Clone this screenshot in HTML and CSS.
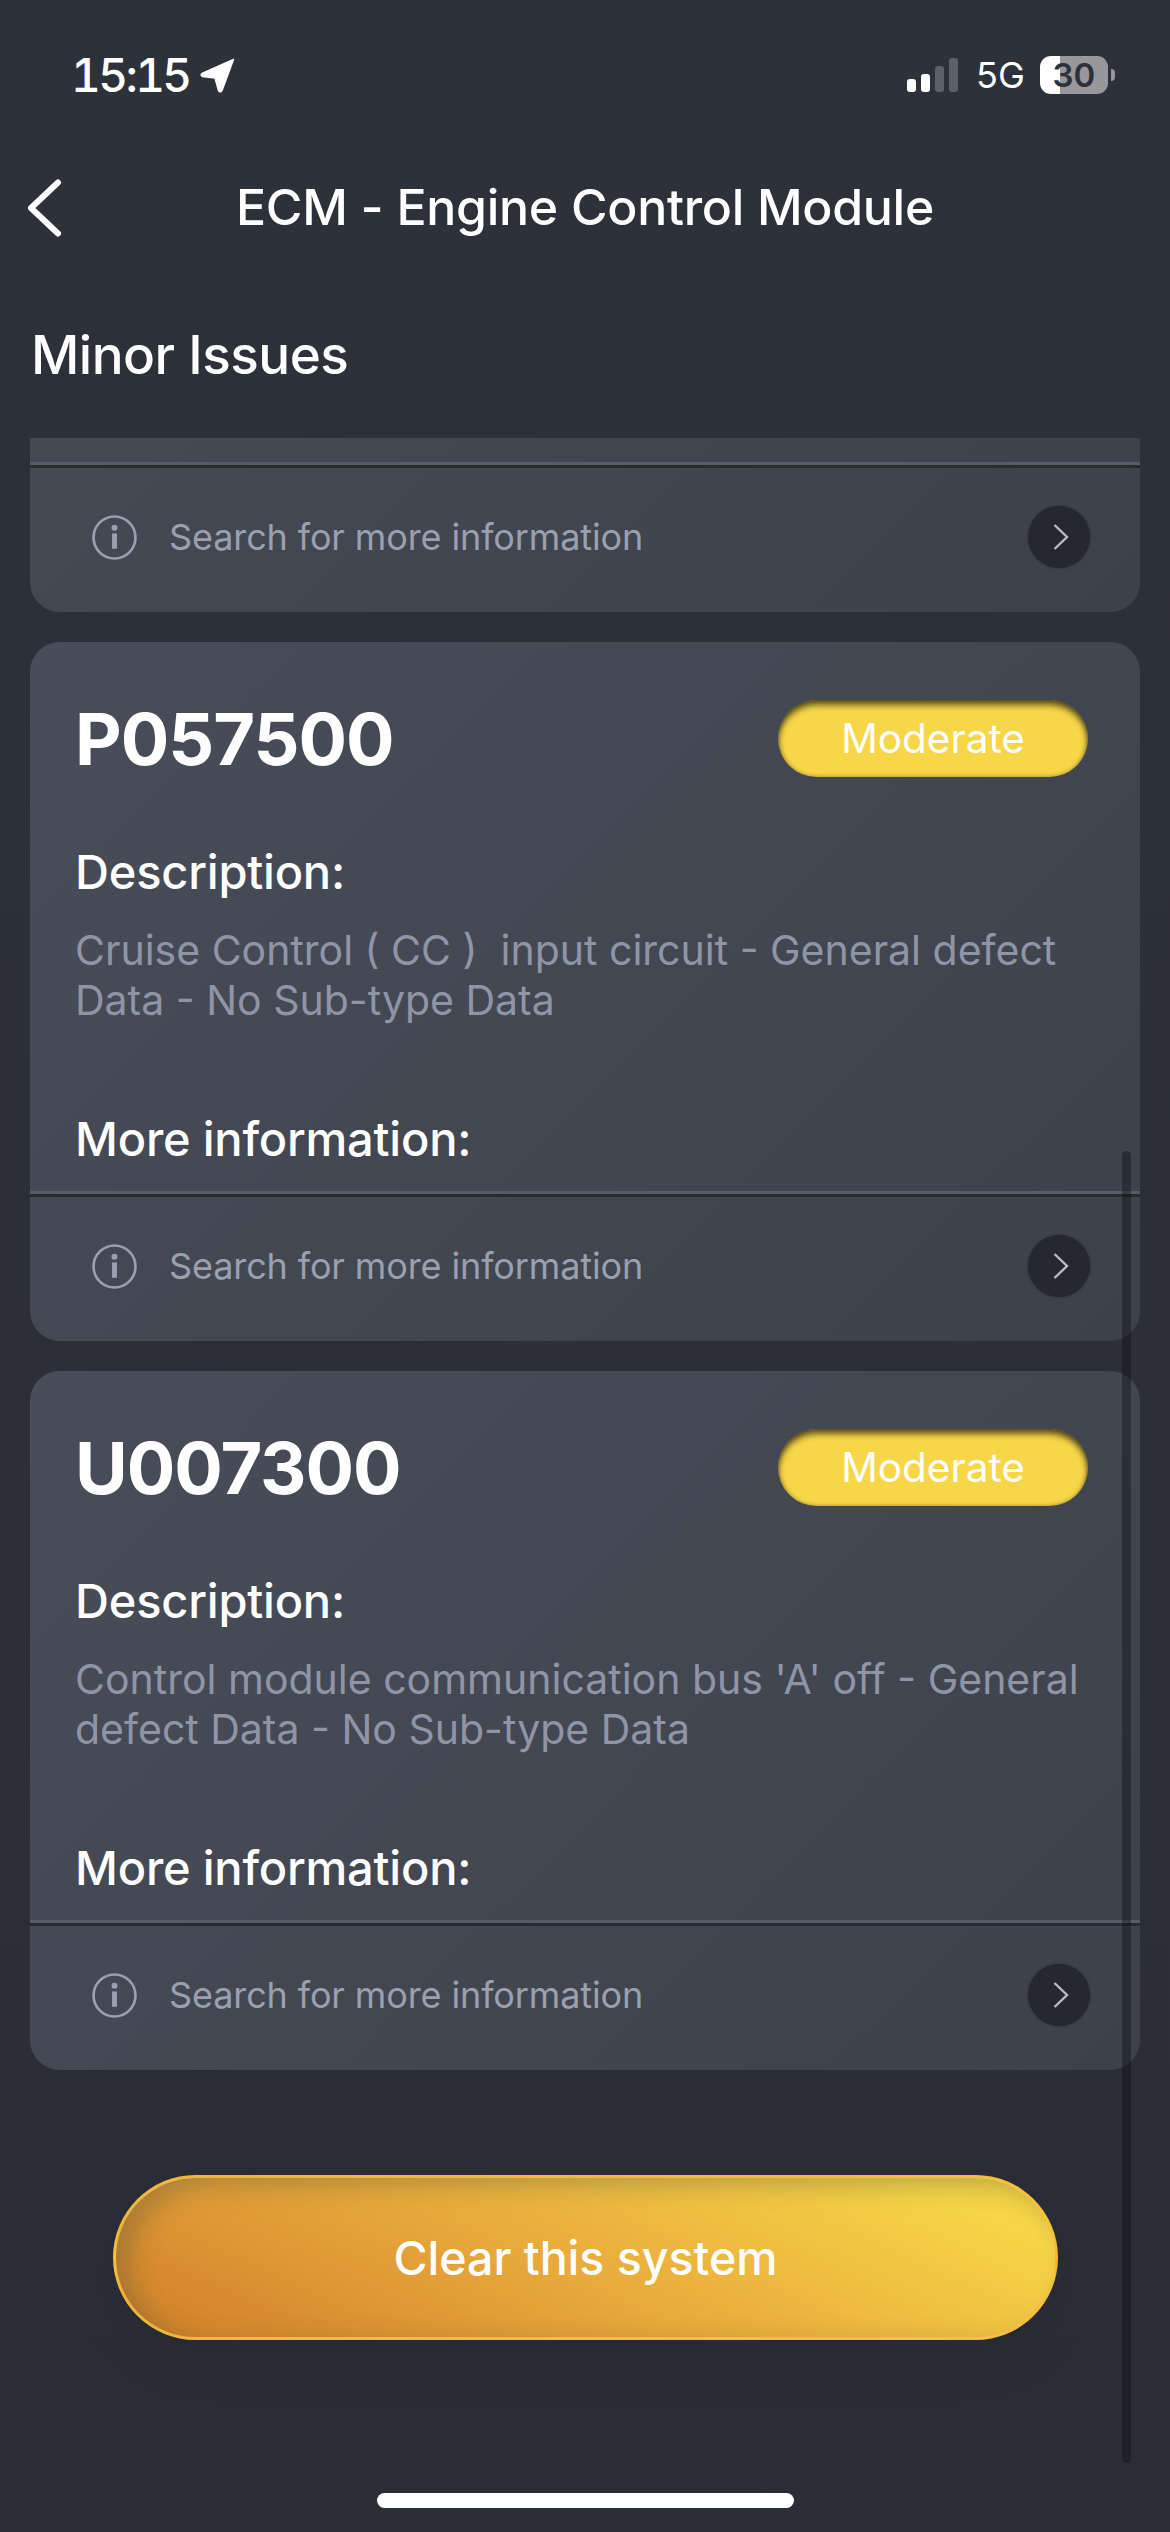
FILE: index.html
```html
<!DOCTYPE html>
<html lang="en">
<head>
    <meta charset="UTF-8">
    <meta name="viewport" content="width=device-width, initial-scale=1.0">
    <title>ECM - Engine Control Module</title>
    <link rel="stylesheet" href="styles.css">
</head>
<body>
    <div class="screen">
        <!-- Status bar -->
        <div class="status-bar">
            <div class="status-left">
                <span class="time">15:15</span>
                <svg class="loc-icon" viewBox="0 0 36 36"><path d="M33.5 2.5 L2 16.5 Q0 18 2.5 19.5 L15 21 L18.5 33.5 Q20 36 22 33.5 Z" fill="#fff" stroke="#fff" stroke-width="1.5" stroke-linejoin="round"/></svg>
            </div>
            <div class="status-right">
                <div class="signal">
                    <i class="bar bar-1"></i>
                    <i class="bar bar-2"></i>
                    <i class="bar bar-3 off"></i>
                    <i class="bar bar-4 off"></i>
                </div>
                <span class="net">5G</span>
                <div class="battery"><span>30</span></div>
                <i class="battery-nub"></i>
            </div>
        </div>

        <!-- Header -->
        <header class="top-nav">
            <svg class="back-icon" viewBox="0 0 36 60"><path d="M32 4.5 L5 30 L32 55.5" fill="none" stroke="#fff" stroke-width="6" stroke-linecap="round" stroke-linejoin="round"/></svg>
            <h1>ECM - Engine Control Module</h1>
        </header>

        <h2 class="section-title">Minor Issues</h2>

        <!-- Issue list -->
        <div class="issue-list">
            <div class="card card-cut">
                <div class="divider"></div>
                <div class="search-row">
                    <svg class="info-icon" viewBox="0 0 44 44"><circle cx="22" cy="22" r="20.5" fill="none" stroke="#98a0b2" stroke-width="2.6"/><circle cx="22" cy="12.5" r="2.9" fill="#98a0b2"/><rect x="19.6" y="18" width="4.8" height="15" fill="#98a0b2"/></svg>
                    <span class="search-text">Search for more information</span>
                    <div class="go-btn"><svg viewBox="0 0 16 26"><path d="M1.5 1 L14 13 L1.5 25" fill="none" stroke="#b9bcc6" stroke-width="2.4"/></svg></div>
                </div>
            </div>

            <div class="card">
                <div class="card-body">
                    <div class="card-head">
                        <span class="code">P057500</span>
                        <span class="badge">Moderate</span>
                    </div>
                    <h3 class="label">Description:</h3>
                    <p class="desc">Cruise Control ( CC ) &nbsp;input circuit - General defect Data - No Sub-type Data</p>
                    <h3 class="label label-more">More information:</h3>
                </div>
                <div class="divider"></div>
                <div class="search-row">
                    <svg class="info-icon" viewBox="0 0 44 44"><circle cx="22" cy="22" r="20.5" fill="none" stroke="#98a0b2" stroke-width="2.6"/><circle cx="22" cy="12.5" r="2.9" fill="#98a0b2"/><rect x="19.6" y="18" width="4.8" height="15" fill="#98a0b2"/></svg>
                    <span class="search-text">Search for more information</span>
                    <div class="go-btn"><svg viewBox="0 0 16 26"><path d="M1.5 1 L14 13 L1.5 25" fill="none" stroke="#b9bcc6" stroke-width="2.4"/></svg></div>
                </div>
            </div>

            <div class="card">
                <div class="card-body">
                    <div class="card-head">
                        <span class="code">U007300</span>
                        <span class="badge">Moderate</span>
                    </div>
                    <h3 class="label">Description:</h3>
                    <p class="desc">Control module communication bus 'A' off - General defect Data - No Sub-type Data</p>
                    <h3 class="label label-more">More information:</h3>
                </div>
                <div class="divider"></div>
                <div class="search-row">
                    <svg class="info-icon" viewBox="0 0 44 44"><circle cx="22" cy="22" r="20.5" fill="none" stroke="#98a0b2" stroke-width="2.6"/><circle cx="22" cy="12.5" r="2.9" fill="#98a0b2"/><rect x="19.6" y="18" width="4.8" height="15" fill="#98a0b2"/></svg>
                    <span class="search-text">Search for more information</span>
                    <div class="go-btn"><svg viewBox="0 0 16 26"><path d="M1.5 1 L14 13 L1.5 25" fill="none" stroke="#b9bcc6" stroke-width="2.4"/></svg></div>
                </div>
            </div>
        </div>

        <button class="clear-btn">Clear this system</button>

        <div class="home-bar"></div>
        <div class="scroll-thumb"></div>
    </div>
</body>
</html>
```

FILE: styles.css
```css
* { box-sizing: border-box; }
body { margin: 0; padding: 0; font-family: Inter, "Liberation Sans", sans-serif; color: #fff; }
.screen {
    position: relative; width: 1170px; height: 2532px; overflow: hidden;
    background: linear-gradient(180deg, #2d313a 0%, #2a2d35 100%);
}
/* Status bar */
.status-bar { display: flex; justify-content: space-between; align-items: center; height: 50px; margin-top: 50px; padding: 0 55px 0 71px; }
.status-left { display: flex; align-items: center; gap: 13px; }
.time { font-size: 46px; font-weight: 500; font-variant-numeric: tabular-nums; letter-spacing: -2.6px; line-height: 50px; width: 116px; white-space: nowrap; }
.loc-icon { width: 36px; height: 36px; display: block; }
.status-right { display: flex; align-items: center; }
.signal { display: flex; align-items: flex-end; gap: 5px; height: 34px; margin-right: 18px; }
.bar { display: block; width: 9px; background: #fff; border-radius: 3px; }
.bar-1 { height: 13px; }
.bar-2 { height: 18px; }
.bar-3 { height: 26px; }
.bar-4 { height: 34px; }
.bar.off { background: #5c606a; }
.net { font-size: 36px; font-weight: 400; width: 46px; margin-right: 18px; line-height: 40px; white-space: nowrap; }
.battery {
    width: 68px; height: 38px; border-radius: 11px; display: flex; align-items: center; justify-content: center;
    background: linear-gradient(90deg, #fff 0, #fff 20px, #98989c 20px, #98989c 100%);
    color: #2d313b; font-size: 33px; font-weight: 600;
}
.battery-nub { display: block; width: 4px; height: 12px; margin-left: 3px; background: #98989c; border-radius: 0 6px 6px 0; }
/* Header */
.top-nav { position: relative; display: flex; justify-content: center; align-items: center; height: 80px; margin-top: 67px; }
.top-nav h1 { margin: 0; font-size: 50px; font-weight: 500; letter-spacing: -0.3px; }
.back-icon { position: absolute; left: 26px; top: 11px; width: 36px; height: 60px; }
.section-title { margin: 78px 0 0; padding-left: 31px; height: 60px; font-size: 53px; line-height: 60px; font-weight: 500; letter-spacing: -0.5px; }
/* Cards */
.issue-list { display: flex; flex-direction: column; gap: 30px; margin: 53px 30px 0; height: 1632px; }
.card {
    background: linear-gradient(135deg, #484d59 0%, #3d414b 100%);
    border-radius: 30px; height: 699px; display: flex; flex-direction: column; overflow: hidden;
}
.card-cut { height: 174px; border-radius: 0 0 30px 30px; padding-top: 24px; background: linear-gradient(135deg, #444954 0%, #3d414b 100%); }
.card-body { flex: 1; padding: 58px 52px 0 45px; }
.card-head { display: flex; justify-content: space-between; align-items: center; height: 77px; }
.code { font-size: 72px; font-weight: 700; letter-spacing: -1px; }
.badge {
    width: 310px; height: 77px; border-radius: 39px; display: flex; align-items: center; justify-content: center;
    background: #f7d648; font-size: 40.5px; box-shadow: inset 0 5px 6px rgba(0,0,0,0.6), inset 0 0 4px rgba(0,0,0,0.35);
}
.label { margin: 0; font-size: 47px; font-weight: 500; line-height: 56px; letter-spacing: -0.2px; }
.card-head + .label { margin-top: 67px; }
.desc { margin: 25px 0 0; font-size: 41px; line-height: 50px; color: #8f95a7; letter-spacing: 0; }
.label-more { margin-top: 86px; }
.divider { height: 6px; flex: none; background: linear-gradient(180deg, #585c68 50%, #2b2a2d 50%); }
.search-row { flex: none; height: 144px; display: flex; align-items: center; padding: 0 50px 6px 62px; }
.info-icon { width: 45px; height: 45px; flex: none; }
.search-text { flex: 1; margin-left: 32px; font-size: 36px; color: #9aa0af; letter-spacing: -0.12px; }
.go-btn {
    width: 62px; height: 62px; border-radius: 50%; background: #25282e; display: flex; align-items: center; justify-content: center;
    box-shadow: 0 0 3px rgba(0,0,0,0.3);
}
.go-btn svg { width: 16px; height: 26px; margin-left: 4px; }
/* Button */
.clear-btn {
    display: block; width: 945px; height: 165px; margin: 105px 0 0 113px; border-radius: 83px;
    border: 3px solid rgba(245,190,60,0.85); color: #fff; font-family: inherit; font-size: 46.5px; font-weight: 500;
    background: linear-gradient(25deg, #cf7f29 0%, #e3a038 36%, #eeba40 62%, #f6d546 88%);
    box-shadow: inset 14px 8px 24px rgba(80,85,60,0.34), 0 20px 60px rgba(0,0,0,0.08);
}
.home-bar { width: 417px; height: 15px; margin: 153px auto 0; background: #fff; border-radius: 8px; }
.scroll-thumb { position: absolute; left: 1122px; top: 1151px; width: 9px; height: 1312px; border-radius: 5px; background: rgba(15,17,20,0.42); }
```
